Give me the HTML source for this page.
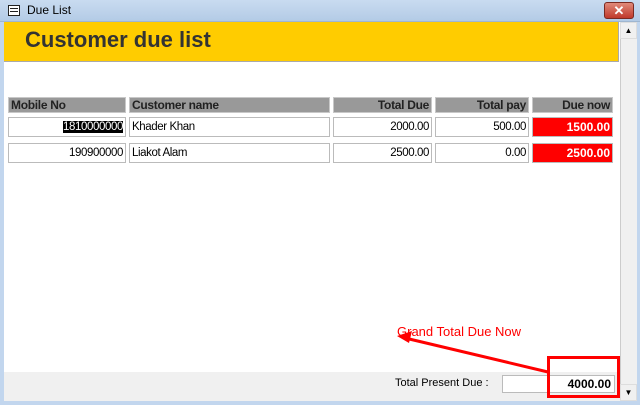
<!DOCTYPE html>
<html><head><style>
*{margin:0;padding:0;box-sizing:border-box}
body{width:640px;height:405px;overflow:hidden;background:#fff;font-family:"Liberation Sans",sans-serif;position:relative}
.abs{position:absolute}
.title{left:0;top:0;width:640px;height:22px;background:linear-gradient(#c9dbf0,#b3cbe6);border-bottom:1px solid #9fb6d0}
.hd{position:absolute;top:97px;height:16px;background:#999;border:1px solid #c8c8c8;font-size:12px;font-weight:bold;color:#222;line-height:14px;padding:0 2px;letter-spacing:-0.3px}
.cell{position:absolute;height:20px;border:1px solid #bbb;font-size:11.5px;line-height:18px;padding:0 2px;background:#fff;letter-spacing:-0.4px}
.r{text-align:right}
.red{background:#f00;color:#fff;font-weight:bold;font-size:12px;letter-spacing:0}
</style></head><body>
<div class="abs title"></div>
<div class="abs" style="left:8px;top:5px;width:12px;height:11px;border:1px solid #222;background:#fff"></div>
<div class="abs" style="left:10px;top:8px;width:8px;height:1px;background:#222;box-shadow:0 3px 0 #222"></div>
<div class="abs" style="left:27px;top:3px;font-size:12px;color:#000">Due List</div>
<div class="abs" style="left:604px;top:2px;width:30px;height:17px;border-radius:3px;background:linear-gradient(#e08a7a,#c0392b);border:1px solid #7a2a22;color:#fff;font-weight:bold;font-size:13px;text-align:center;line-height:15px">✕</div>
<div class="abs" style="left:0;top:22px;width:4px;height:383px;background:#c2d6ee"></div>
<div class="abs" style="left:637px;top:22px;width:3px;height:383px;background:#c2d6ee"></div>
<div class="abs" style="left:0;top:401px;width:640px;height:4px;background:#c2d6ee"></div>
<div class="abs" style="left:4px;top:22px;width:615px;height:40px;background:#fc0;border-bottom:1px solid #aaa;border-right:1px solid #aaa"></div>
<div class="abs" style="left:25px;top:27px;font-size:22px;font-weight:bold;color:#333">Customer due list</div>
<div class="abs" style="left:620px;top:22px;width:17px;height:379px;background:#f0f0f0;border-left:1px solid #ccc"></div>
<div class="abs" style="left:620px;top:22px;width:17px;height:17px;border:1px solid #ddd;font-size:8px;text-align:center;line-height:15px">▲</div>
<div class="abs" style="left:620px;top:384px;width:17px;height:17px;border:1px solid #ddd;font-size:8px;text-align:center;line-height:15px">▼</div>
<div class="hd" style="left:8px;width:118px">Mobile No</div>
<div class="hd" style="left:129px;width:201px">Customer name</div>
<div class="hd r" style="left:333px;width:99px">Total Due</div>
<div class="hd r" style="left:435px;width:94px">Total pay</div>
<div class="hd r" style="left:532px;width:81px">Due now</div>
<div class="cell r" style="left:8px;top:117px;width:118px"><span style="background:#000;color:#fff">1810000000</span></div>
<div class="cell" style="left:129px;top:117px;width:201px">Khader Khan</div>
<div class="cell r" style="left:333px;top:117px;width:99px">2000.00</div>
<div class="cell r" style="left:435px;top:117px;width:94px">500.00</div>
<div class="cell r red" style="left:532px;top:117px;width:81px">1500.00</div>
<div class="cell r" style="left:8px;top:143px;width:118px">190900000</div>
<div class="cell" style="left:129px;top:143px;width:201px">Liakot Alam</div>
<div class="cell r" style="left:333px;top:143px;width:99px">2500.00</div>
<div class="cell r" style="left:435px;top:143px;width:94px">0.00</div>
<div class="cell r red" style="left:532px;top:143px;width:81px">2500.00</div>
<div class="abs" style="left:4px;top:372px;width:616px;height:29px;background:#f0f0f0"></div>
<div class="abs" style="left:395px;top:377px;font-size:11px;color:#000">Total Present Due :</div>
<div class="abs" style="left:502px;top:375px;width:113px;height:18px;background:#fff;border:1px solid #bbb;font-size:12px;font-weight:bold;text-align:right;padding-right:3px;line-height:16px">4000.00</div>
<div class="abs" style="left:547px;top:356px;width:73px;height:42px;border:3px solid #f00"></div>
<div class="abs" style="left:397px;top:324px;font-size:13px;color:#f00">Grand Total Due Now</div>
<svg class="abs" style="left:0;top:0" width="640" height="405"><line x1="548" y1="372" x2="405" y2="338" stroke="#f00" stroke-width="3"/><polygon points="397,336 412,331 409,343" fill="#f00"/></svg>
</body></html>
